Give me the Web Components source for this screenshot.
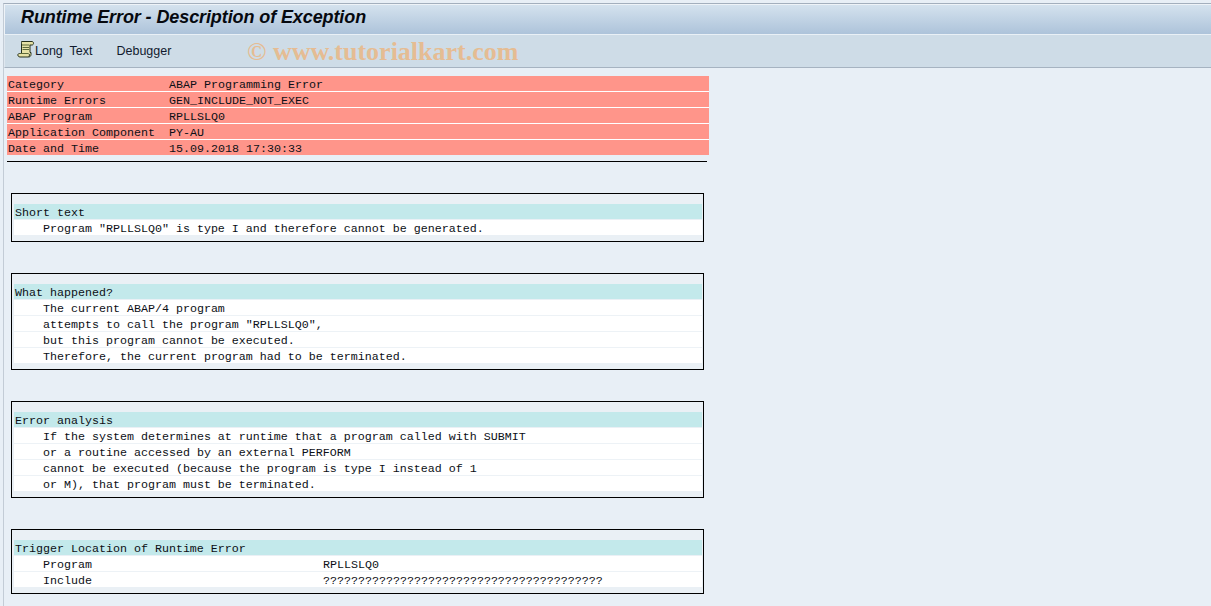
<!DOCTYPE html>
<html><head><meta charset="utf-8"><title>Runtime Error</title>
<style>
html,body{margin:0;height:100%;overflow:hidden}
body{background:#e8eff6;font-family:"Liberation Mono",monospace;font-size:11.67px;color:#0c1016}
</style></head><body>
<sap-page>
  <sap-title>Runtime Error - Description of Exception</sap-title>
  <sap-toolbar></sap-toolbar>
  <sap-content>
    <sap-header-table>
      <sap-kv k="Category" v="ABAP Programming Error"></sap-kv>
      <sap-kv k="Runtime Errors" v="GEN_INCLUDE_NOT_EXEC"></sap-kv>
      <sap-kv k="ABAP Program" v="RPLLSLQ0"></sap-kv>
      <sap-kv k="Application Component" v="PY-AU"></sap-kv>
      <sap-kv k="Date and Time" v="15.09.2018 17:30:33"></sap-kv>
    </sap-header-table>
    <sap-section heading="Short text">
      <sap-line>Program "RPLLSLQ0" is type I and therefore cannot be generated.</sap-line>
    </sap-section>
    <sap-section heading="What happened?">
      <sap-line>The current ABAP/4 program</sap-line>
      <sap-line>attempts to call the program "RPLLSLQ0",</sap-line>
      <sap-line>but this program cannot be executed.</sap-line>
      <sap-line>Therefore, the current program had to be terminated.</sap-line>
    </sap-section>
    <sap-section heading="Error analysis">
      <sap-line>If the system determines at runtime that a program called with SUBMIT</sap-line>
      <sap-line>or a routine accessed by an external PERFORM</sap-line>
      <sap-line>cannot be executed (because the program is type I instead of 1</sap-line>
      <sap-line>or M), that program must be terminated.</sap-line>
    </sap-section>
    <sap-section heading="Trigger Location of Runtime Error">
      <sap-line k="Program">RPLLSLQ0</sap-line>
      <sap-line k="Include">????????????????????????????????????????</sap-line>
    </sap-section>
  </sap-content>
</sap-page>
<script>
function def(name, html, extra){
  customElements.define(name, class extends HTMLElement{
    constructor(){super();this.attachShadow({mode:'open'}).innerHTML=html;}
    connectedCallback(){ if(extra) extra(this); }
  });
}
def('sap-page',`<style>:host{display:flex;flex-direction:column;height:606px;padding-top:3px;padding-left:3px;box-sizing:border-box;overflow:hidden}
.f{display:flex;flex-direction:column;flex:1;border-left:1px solid #c3ccd6;border-top:1px solid #a3afbd}</style><div class="f"><slot></slot></div>`);
def('sap-title',`<style>:host{display:block;height:29px;background:linear-gradient(#d4e2ee,#adc3da);border-top:1px solid #eef3f8;border-left:1px solid #eef3f8;border-bottom:1px solid #e9f0f6;padding-left:16px;
font:italic bold 18px/25px "Liberation Sans",sans-serif;letter-spacing:-.1px;color:#06090f;white-space:nowrap;overflow:hidden}</style><slot></slot>`);
def('sap-toolbar',`<style>:host{display:flex;align-items:center;height:32px;background:#cedce7;border-bottom:1px solid #a6b3c1;border-left:1px solid #dfe7ef;position:relative;
font:12.500px "Liberation Sans",sans-serif;color:#111a2e;white-space:nowrap}
svg{margin-left:12px;flex:none;margin-top:-3px}
.b{word-spacing:3.500px}
.d{margin-left:24px}
.w{position:absolute;left:242px;top:2px;font:bold 26px/30px "Liberation Serif",serif;color:#e5bc93}
</style>
<svg width="18" height="17" viewBox="0 0 18 17"><path d="M4.500 .5H15c2 0 2 3.500 0 3.500h-2v7.500H14v2c0 1.500-1 2.500-2.500 2.500H3c-2.500 0-3-3.500-.5-3.500H4.500V3c0-1 0-2.500 0-2.500z" fill="#e6e2a6" stroke="#26301c"/><path d="M5 4h7.500M5.500 6.500h6.500M5.500 8.500h6.500M3 12.500h8" stroke="#5e6a3a"/><path d="M11.500 16c1.300-.8 1.300-3 0-3.500" fill="none" stroke="#26301c"/></svg>
<span class="b">Long Text</span><span class="b d">Debugger</span>
<span class="w">© www.tutorialkart.com</span>`);
def('sap-content',`<style>:host{display:block;padding:8px 0 0 3px}</style><slot></slot>`);
def('sap-header-table',`<style>:host{display:block;width:702px}
.r{display:flex;flex-direction:column;gap:1px;background:#fff}
.l{height:1px;width:700px;background:#000;margin-top:6px}
</style><div class="r"><slot></slot></div><div class="l"></div>`);
def('sap-kv',`<style>:host{display:grid;grid-template-columns:161px 1fr;height:15px;line-height:19px;background:#ff958a;padding-left:1px;white-space:pre}</style><span id="k"></span><span id="v"></span>`,
 el=>{el.shadowRoot.getElementById('k').textContent=el.getAttribute('k');el.shadowRoot.getElementById('v').textContent=el.getAttribute('v');});
def('sap-section',`<style>:host{display:block;width:693px;box-sizing:border-box;margin:31px 0 0 4px;border:1px solid #000;padding:10px 1px 6px 2px;background:#eaf0f5}
.h{height:15px;line-height:19px;background:#c3e9eb;padding-left:1px;margin-bottom:1px;white-space:pre}
.b{display:flex;flex-direction:column;gap:1px;background:#edf2f6}
</style><div class="h" id="h"></div><div class="b"><slot></slot></div>`,
 el=>{el.shadowRoot.getElementById('h').textContent=el.getAttribute('heading');});
def('sap-line',`<style>:host{display:block;height:15px;line-height:19px;background:#fff;padding-left:29px;white-space:pre}
.g{display:grid;grid-template-columns:280px 1fr}</style><div class="g" id="g"><span id="k"></span><slot></slot></div>`,
 el=>{const k=el.getAttribute('k');const g=el.shadowRoot.getElementById('g');
  if(k){el.shadowRoot.getElementById('k').textContent=k;}else{g.style.display='block';el.shadowRoot.getElementById('k').remove();}});
</script>
</body></html>
